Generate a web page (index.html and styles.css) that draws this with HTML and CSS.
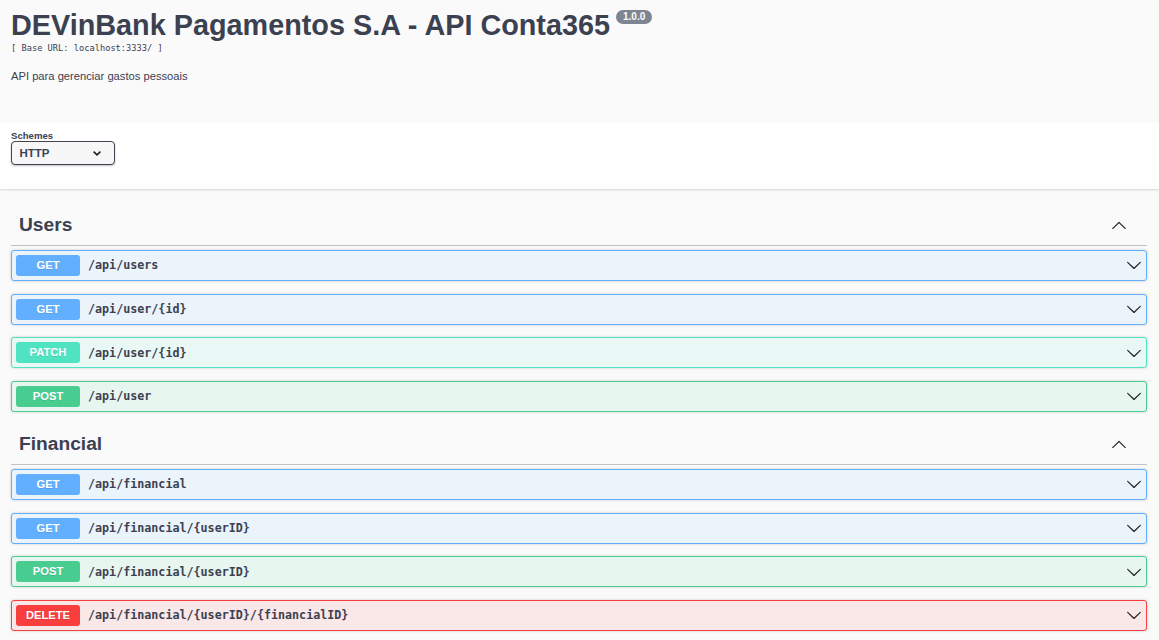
FILE: index.html
```html
<!DOCTYPE html>
<html lang="pt">
<head>
<meta charset="utf-8">
<title>DEVinBank Pagamentos S.A - API Conta365</title>
<link rel="stylesheet" href="styles.css">
</head>
<body>
<div class="info">
  <div class="title-row">
    <h1 class="title">DEVinBank Pagamentos S.A - API Conta365</h1>
    <span class="version">1.0.0</span>
  </div>
  <pre class="base-url">[ Base URL: localhost:3333/ ]</pre>
  <p class="desc">API para gerenciar gastos pessoais</p>
</div>

<div class="schemes">
  <div class="schemes-label">Schemes</div>
  <div class="select">
    <span>HTTP</span>
    <svg class="select-arrow" width="10" height="10" viewBox="0 0 10 10"><path d="M1.6 3.6 L5 6.8 L8.4 3.6" fill="none" stroke="#222" stroke-width="1.6"/></svg>
  </div>
</div>

<div class="wrapper">
  <section class="tag">
    <div class="tag-header">
      <h3>Users</h3>
      <svg class="arrow" width="16" height="16" viewBox="0 0 20 20"><path d="M17.418 14.908c.272.268.709.268.979 0s.271-.701 0-.969l-7.908-7.83c-.27-.268-.707-.268-.979 0l-7.908 7.83c-.27.268-.27.701 0 .969.271.268.709.268.979 0L10 7.767l7.418 7.141z"/></svg>
    </div>
    <div class="op get"><span class="method">GET</span><span class="path">/api/users</span><svg class="arrow" width="16" height="16" viewBox="0 0 20 20"><path d="M17.418 6.109c.272-.268.709-.268.979 0s.271.701 0 .969l-7.908 7.83c-.27.268-.707.268-.979 0l-7.908-7.83c-.27-.268-.27-.701 0-.969.271-.268.709-.268.979 0L10 13.25l7.418-7.141z"/></svg></div>
    <div class="op get"><span class="method">GET</span><span class="path">/api/user/{id}</span><svg class="arrow" width="16" height="16" viewBox="0 0 20 20"><path d="M17.418 6.109c.272-.268.709-.268.979 0s.271.701 0 .969l-7.908 7.83c-.27.268-.707.268-.979 0l-7.908-7.83c-.27-.268-.27-.701 0-.969.271-.268.709-.268.979 0L10 13.25l7.418-7.141z"/></svg></div>
    <div class="op patch"><span class="method">PATCH</span><span class="path">/api/user/{id}</span><svg class="arrow" width="16" height="16" viewBox="0 0 20 20"><path d="M17.418 6.109c.272-.268.709-.268.979 0s.271.701 0 .969l-7.908 7.83c-.27.268-.707.268-.979 0l-7.908-7.83c-.27-.268-.27-.701 0-.969.271-.268.709-.268.979 0L10 13.25l7.418-7.141z"/></svg></div>
    <div class="op post"><span class="method">POST</span><span class="path">/api/user</span><svg class="arrow" width="16" height="16" viewBox="0 0 20 20"><path d="M17.418 6.109c.272-.268.709-.268.979 0s.271.701 0 .969l-7.908 7.83c-.27.268-.707.268-.979 0l-7.908-7.83c-.27-.268-.27-.701 0-.969.271-.268.709-.268.979 0L10 13.25l7.418-7.141z"/></svg></div>
  </section>

  <section class="tag">
    <div class="tag-header">
      <h3>Financial</h3>
      <svg class="arrow" width="16" height="16" viewBox="0 0 20 20"><path d="M17.418 14.908c.272.268.709.268.979 0s.271-.701 0-.969l-7.908-7.83c-.27-.268-.707-.268-.979 0l-7.908 7.83c-.27.268-.27.701 0 .969.271.268.709.268.979 0L10 7.767l7.418 7.141z"/></svg>
    </div>
    <div class="op get"><span class="method">GET</span><span class="path">/api/financial</span><svg class="arrow" width="16" height="16" viewBox="0 0 20 20"><path d="M17.418 6.109c.272-.268.709-.268.979 0s.271.701 0 .969l-7.908 7.83c-.27.268-.707.268-.979 0l-7.908-7.83c-.27-.268-.27-.701 0-.969.271-.268.709-.268.979 0L10 13.25l7.418-7.141z"/></svg></div>
    <div class="op get"><span class="method">GET</span><span class="path">/api/financial/{userID}</span><svg class="arrow" width="16" height="16" viewBox="0 0 20 20"><path d="M17.418 6.109c.272-.268.709-.268.979 0s.271.701 0 .969l-7.908 7.83c-.27.268-.707.268-.979 0l-7.908-7.83c-.27-.268-.27-.701 0-.969.271-.268.709-.268.979 0L10 13.25l7.418-7.141z"/></svg></div>
    <div class="op post"><span class="method">POST</span><span class="path">/api/financial/{userID}</span><svg class="arrow" width="16" height="16" viewBox="0 0 20 20"><path d="M17.418 6.109c.272-.268.709-.268.979 0s.271.701 0 .969l-7.908 7.83c-.27.268-.707.268-.979 0l-7.908-7.83c-.27-.268-.27-.701 0-.969.271-.268.709-.268.979 0L10 13.25l7.418-7.141z"/></svg></div>
    <div class="op delete"><span class="method">DELETE</span><span class="path">/api/financial/{userID}/{financialID}</span><svg class="arrow" width="16" height="16" viewBox="0 0 20 20"><path d="M17.418 6.109c.272-.268.709-.268.979 0s.271.701 0 .969l-7.908 7.83c-.27.268-.707.268-.979 0l-7.908-7.83c-.27-.268-.27-.701 0-.969.271-.268.709-.268.979 0L10 13.25l7.418-7.141z"/></svg></div>
  </section>
</div>
</body>
</html>
```

FILE: styles.css
```css
html, body {
  margin: 0;
  padding: 0;
}
body {
  background: #fafafa;
  font-family: "Liberation Sans", Arial, sans-serif;
  color: #3b4151;
}

.info {
  height: 122px;
  box-sizing: border-box;
  padding: 8px 11px 0;
}
.title-row {
  display: flex;
  align-items: flex-start;
}
.title {
  margin: 0;
  font-size: 28.8px;
  line-height: 34px;
  font-weight: 700;
  color: #3b4151;
}
.version {
  margin: 2px 0 0 6px;
  height: 14px;
  padding: 0 7px;
  border-radius: 57px;
  background: #7d8492;
  color: #fff;
  font-size: 10px;
  font-weight: 700;
  line-height: 14px;
}
.base-url {
  margin: 0;
  font-family: "DejaVu Sans Mono", "Liberation Mono", monospace;
  font-size: 8.7px;
  line-height: 12px;
  color: #3b4151;
}
.desc {
  margin: 15px 0 0;
  font-size: 11.2px;
  line-height: 14px;
  color: #3b4151;
}

.schemes {
  height: 67px;
  box-sizing: border-box;
  padding: 8px 11px 0;
  background: #fff;
  box-shadow: 0 1px 2px 0 rgba(0, 0, 0, 0.15);
}
.schemes-label {
  font-size: 9.6px;
  font-weight: 700;
  line-height: 11px;
  color: #3b4151;
}
.select {
  width: 104px;
  height: 24px;
  box-sizing: border-box;
  border: 1.5px solid #41444e;
  border-radius: 4px;
  background: #f7f7f7;
  box-shadow: 0 1px 2px 0 rgba(0, 0, 0, 0.25);
  display: flex;
  align-items: center;
  justify-content: space-between;
  padding: 0 12px 0 7.5px;
  font-size: 11.5px;
  font-weight: 700;
  color: #3b4151;
}
.select-arrow {
  display: block;
}

.wrapper {
  padding: 16.67px 12px 0 11px;
}
.tag-header {
  height: 40.33px;
  box-sizing: border-box;
  display: flex;
  align-items: center;
  justify-content: space-between;
  padding: 0 20px 0 8px;
  border-bottom: 1px solid rgba(59, 65, 81, 0.3);
  margin-bottom: 4px;
}
.tag-header h3 {
  margin: 0;
  font-size: 19.2px;
  font-weight: 700;
  color: #3b4151;
}
.arrow {
  display: block;
  fill: #222;
  flex: none;
}

.op {
  height: 31px;
  box-sizing: border-box;
  display: flex;
  align-items: center;
  padding: 0 4px;
  margin-bottom: 12.67px;
  border: 1px solid;
  border-radius: 3px;
  box-shadow: 0 0 3px rgba(0, 0, 0, 0.19);
}
.op .arrow {
  margin-left: auto;
}
.method {
  width: 64px;
  height: 21px;
  border-radius: 3px;
  color: #fff;
  font-size: 11.2px;
  font-weight: 700;
  line-height: 21px;
  text-align: center;
  text-shadow: 0 1px 0 rgba(0, 0, 0, 0.1);
  flex: none;
}
.path {
  margin-left: 8px;
  font-family: "DejaVu Sans Mono", "Liberation Mono", monospace;
  font-size: 11.7px;
  font-weight: 600;
  color: #3b4151;
}

.get { background: #ebf3fb; border-color: #61affe; }
.get .method { background: #61affe; }
.patch { background: #e9f8f4; border-color: #50e3c2; }
.patch .method { background: #50e3c2; }
.post { background: #e8f6f0; border-color: #49cc90; }
.post .method { background: #49cc90; }
.delete { background: #fae7e7; border-color: #f93e3e; }
.delete .method { background: #f93e3e; }
```
